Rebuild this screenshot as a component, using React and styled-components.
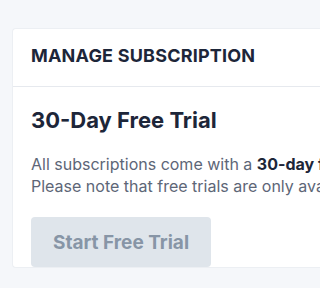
import React from "react";
import styled, { createGlobalStyle } from "styled-components";

const GlobalStyle = createGlobalStyle`
  html, body {
    margin: 0;
    padding: 0;
    background: #f5f7fa;
    font-family: Inter, "Open Sans", "Liberation Sans", sans-serif;
    overflow: hidden;
  }
`;

const Page = styled.div`
  width: 100%;
  height: 288px;
  overflow: hidden;
  padding: 28px 0 0 12px;
  box-sizing: border-box;
`;

const Card = styled.section`
  background: #ffffff;
  border: 1px solid #eceff3;
  border-right: none;
  border-radius: 4px 0 0 4px;
  overflow: hidden;
`;

const CardHeader = styled.header`
  padding: 17px 18px 20px;
  border-bottom: 1px solid #e6e9ee;
`;

const HeaderTitle = styled.h2`
  margin: 0;
  font-size: 18px;
  line-height: 20px;
  font-weight: 700;
  letter-spacing: 0.2px;
  color: #1d2639;
  white-space: nowrap;
`;

const CardBody = styled.div`
  padding: 20px 18px 0;
`;

const Title = styled.h3`
  margin: 0 0 20px;
  font-size: 22px;
  line-height: 26px;
  font-weight: 700;
  color: #1d2639;
  white-space: nowrap;
`;

const Text = styled.p`
  margin: 0 0 20px;
  font-size: 16px;
  line-height: 22px;
  color: #5d6677;
  white-space: nowrap;

  strong {
    color: #1d2639;
    font-weight: 700;
  }
`;

const Button = styled.button`
  width: 180px;
  height: 50px;
  border: none;
  border-radius: 4px;
  background: #dfe5eb;
  color: #8795a6;
  font-family: inherit;
  font-size: 19px;
  font-weight: 700;
  cursor: not-allowed;
`;

export default function App() {
  return (
    <>
      <GlobalStyle />
      <Page>
        <Card>
          <CardHeader>
            <HeaderTitle>MANAGE SUBSCRIPTION</HeaderTitle>
          </CardHeader>
          <CardBody>
            <Title>30-Day Free Trial</Title>
            <Text>
              All subscriptions come with a <strong>30-day free trial</strong>.
              <br />
              Please note that free trials are only available once.
            </Text>
            <Button disabled>Start Free Trial</Button>
          </CardBody>
        </Card>
      </Page>
    </>
  );
}
